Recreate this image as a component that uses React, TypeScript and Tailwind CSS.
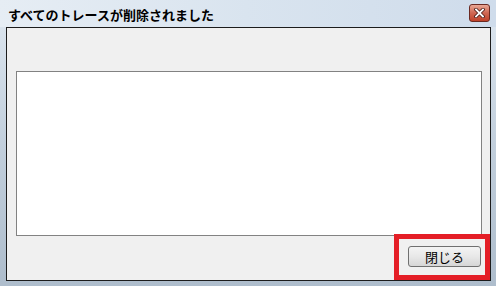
import React from 'react';

export default function App() {
  return (
    <div className="relative w-[496px] h-[286px] overflow-hidden bg-gradient-to-b from-[#dfe8f1] via-[#c2cfdc] to-[#aebdcc] font-['Noto_Sans_CJK_JP',sans-serif] flex flex-col">
      {/* タイトルバー */}
      <div className="h-[27px] flex items-center justify-between pl-[8px] pr-[6px] bg-gradient-to-r from-[#e6edf4] via-[#d9e4ef] to-[#cfdceb] shrink-0">
        <span className="text-[13px] font-bold text-black leading-none pt-[1px]">
          すべてのトレースが削除されました
        </span>
        <div className="w-[21px] h-[18px] mb-[1px] rounded-[3px] border border-[#6b2a22] bg-gradient-to-b from-[#e8a795] via-[#cf6752] to-[#bf4128] flex items-center justify-center">
          <svg width="11" height="10" viewBox="0 0 11 10">
            <path d="M2 1.5 L9 8.5 M9 1.5 L2 8.5" stroke="#4a1a14" strokeWidth="3.4" strokeLinecap="square" />
            <path d="M2 1.5 L9 8.5 M9 1.5 L2 8.5" stroke="#ffffff" strokeWidth="1.8" strokeLinecap="square" />
          </svg>
        </div>
      </div>

      {/* 本体 */}
      <div className="ml-[6px] mr-[5px] h-[254px] border border-[#1c1c1c] bg-[#f0f0f0] flex flex-col pt-[43px] pl-[9px] pr-[8px]">
        <div className="h-[165px] border border-[#828282] bg-white" />
        <div className="flex justify-end pt-[10px] pr-[1px]">
          <button className="w-[73px] h-[21px] rounded-[3px] border border-[#707070] bg-gradient-to-b from-[#f4f4f4] via-[#e8e8e8] to-[#d6d6d6] text-[13px] text-black leading-none flex items-center justify-center">
            閉じる
          </button>
        </div>
      </div>

      {/* 注釈の赤枠 */}
      <div className="absolute left-[394px] top-[234px] w-[96px] h-[46px] border-[5px] border-[#e41e26]" />
    </div>
  );
}
